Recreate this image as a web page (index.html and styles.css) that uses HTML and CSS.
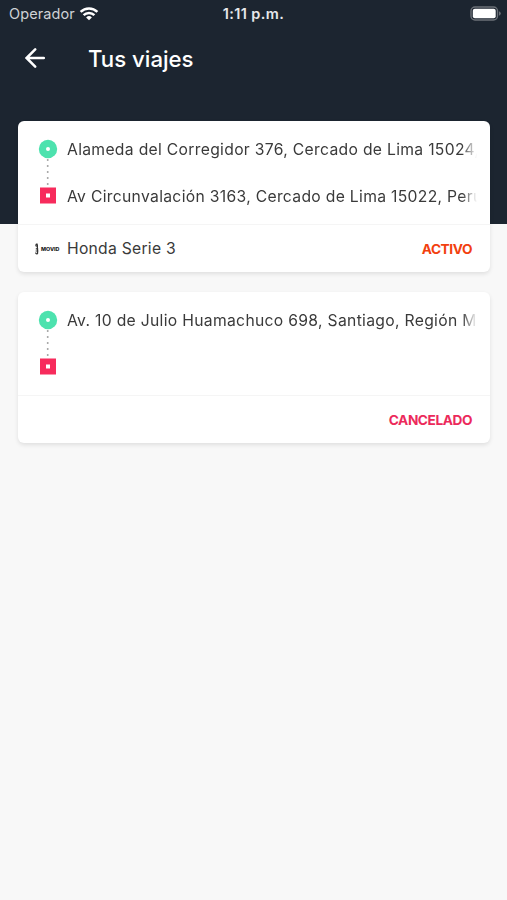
FILE: index.html
```html
<!DOCTYPE html>
<html lang="es">
<head>
  <meta charset="utf-8">
  <title>Tus viajes</title>
  <link rel="stylesheet" href="styles.css">
</head>
<body>
  <div class="screen">
    <div class="status-bar">
      <div class="carrier">
        <span class="carrier-name">Operador</span>
        <svg class="wifi" width="20" height="14" viewBox="0 0 20 14" fill="none" stroke="#fff" stroke-width="2.5">
          <path d="M1.6 4.9a12 12 0 0 1 16.8 0"/>
          <path d="M4.6 8.1a7.7 7.7 0 0 1 10.8 0"/>
          <path d="M10 13.3l-2.9-2.9a4.2 4.2 0 0 1 5.8 0z" fill="#fff" stroke="none"/>
        </svg>
      </div>
      <span class="clock">1:11 p.m.</span>
      <svg class="battery" width="31" height="15" viewBox="0 0 31 15">
        <rect x="1" y="1" width="26.5" height="13" rx="4" fill="none" stroke="#6b7077" stroke-width="1.4"/>
        <rect x="2.8" y="2.8" width="22.9" height="9.4" rx="2" fill="#fff"/>
        <path d="M29 5.2q1.8 .8 1.8 2.3t-1.8 2.3z" fill="#6b7077"/>
      </svg>
    </div>

    <div class="header">
      <svg class="back" width="20" height="20" viewBox="0 0 20 20" fill="none" stroke="#fff" stroke-width="2.5" stroke-linecap="round">
        <path d="M18.8 10H2M10.2 1.4L1.6 10l8.6 8.6"/>
      </svg>
      <h1>Tus viajes</h1>
    </div>

    <div class="trips">
      <div class="card">
        <div class="route">
          <svg class="route-line" width="20" height="66" viewBox="0 0 20 66">
            <path d="M9.7 20v27" stroke="#aaa" stroke-width="1.6" stroke-dasharray="2 4"/>
            <circle cx="10" cy="10" r="9.2" fill="#4de2ae"/>
            <circle cx="10" cy="10" r="2" fill="#fff"/>
            <rect x="2" y="48.5" width="16" height="16" fill="#f72b5c"/>
            <rect x="8" y="54.5" width="4" height="4" fill="#fff"/>
          </svg>
          <div class="places">
            <div class="place">Alameda del Corregidor 376, Cercado de Lima 15024,</div>
            <div class="place">Av Circunvalación 3163, Cercado de Lima 15022, Perú</div>
          </div>
        </div>
        <div class="card-footer">
          <div class="vehicle">
            <svg class="brand" width="26" height="12" viewBox="0 0 26 12">
              <path d="M3.6 1.2a1.2 1.2 0 1 0-1 2.2M3.4 1.5v4.3M1.8 5.9h1.8v4.4a.9 .9 0 1 1-1.6-.8M1.6 8h2.8" fill="none" stroke="#333" stroke-width="1.2"/>
              <text x="7" y="8.4" textLength="18.5" lengthAdjust="spacingAndGlyphs">MOVID</text>
            </svg>
            <span class="vehicle-name">Honda Serie 3</span>
          </div>
          <span class="state active">ACTIVO</span>
        </div>
      </div>

      <div class="card">
        <div class="route">
          <svg class="route-line" width="20" height="66" viewBox="0 0 20 66">
            <path d="M9.7 20v27" stroke="#aaa" stroke-width="1.6" stroke-dasharray="2 4"/>
            <circle cx="10" cy="10" r="9.2" fill="#4de2ae"/>
            <circle cx="10" cy="10" r="2" fill="#fff"/>
            <rect x="2" y="48.5" width="16" height="16" fill="#f72b5c"/>
            <rect x="8" y="54.5" width="4" height="4" fill="#fff"/>
          </svg>
          <div class="places">
            <div class="place">Av. 10 de Julio Huamachuco 698, Santiago, Región M</div>
          </div>
        </div>
        <div class="card-footer">
          <div class="vehicle"></div>
          <span class="state cancelled">CANCELADO</span>
        </div>
      </div>
    </div>
  </div>
</body>
</html>
```

FILE: styles.css
```css
body {
  margin: 0;
  font-family: Inter, Roboto, "Liberation Sans", sans-serif;
  background-color: #f8f8f8;
}

.screen {
  height: 900px;
  overflow: hidden;
  background: linear-gradient(#1c2530 224px, #f8f8f8 224px);
}

svg {
  display: block;
  flex-shrink: 0;
}

.status-bar {
  display: grid;
  grid-template-columns: 1fr auto 1fr;
  align-items: center;
  height: 27px;
  padding: 0 6px 0 9px;
  color: #e6e8ea;
  font-size: 14.5px;
}

.carrier {
  display: flex;
  align-items: center;
  gap: 4px;
  color: #cfd2d6;
}

.carrier-name {
  letter-spacing: 0.1px;
}

.clock {
  font-weight: 600;
  letter-spacing: 0.4px;
  margin-right: 3px;
}

.battery {
  justify-self: end;
}

.header {
  display: flex;
  align-items: center;
  gap: 43px;
  height: 62px;
  padding-left: 25px;
}

h1 {
  margin: 0;
  font-size: 22.2px;
  font-weight: 500;
  color: #fff;
}

.trips {
  display: flex;
  flex-direction: column;
  gap: 20px;
  padding: 32px 17px 0 18px;
}

.card {
  height: 151px;
  background-color: #fff;
  border-radius: 6px;
  box-shadow: 0 2px 4px rgba(0, 0, 0, 0.1);
}

.route {
  display: flex;
  gap: 9px;
  box-sizing: border-box;
  height: 104px;
  padding: 18px 13px 0 20px;
  border-bottom: 1px solid #f5f5f5;
}

.places {
  flex: 1;
  min-width: 0;
}

.place {
  height: 46.5px;
  line-height: 22px;
  overflow: hidden;
  white-space: nowrap;
  font-size: 15.7px;
  letter-spacing: 0.31px;
  color: #3a3a3a;
  -webkit-mask-image: linear-gradient(to left, transparent, #000 15px);
  mask-image: linear-gradient(to left, transparent, #000 15px);
}

.card-footer {
  display: flex;
  align-items: center;
  justify-content: space-between;
  height: 47px;
  padding: 0 18px 0 16px;
}

.vehicle {
  display: flex;
  align-items: center;
  gap: 7px;
  font-size: 15.7px;
  letter-spacing: 0.26px;
  color: #3a3a3a;
}

.vehicle-name {
  line-height: 22px;
  padding-top: 1px;
}

.brand text {
  font-size: 5px;
  font-weight: 800;
  letter-spacing: 0;
  fill: #222;
}

.state {
  font-size: 13.7px;
  font-weight: 700;
  letter-spacing: -0.45px;
}

.active {
  color: #f2400f;
}

.cancelled {
  color: #ec2a5b;
}
```
